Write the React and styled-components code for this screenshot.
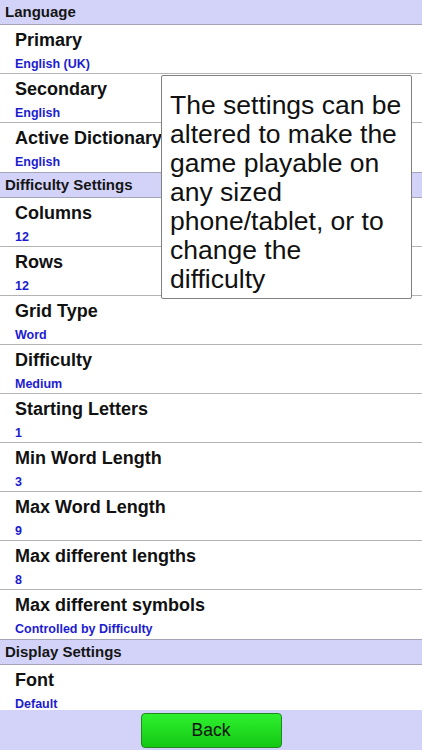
import styled, { createGlobalStyle } from "styled-components";

const GlobalStyle = createGlobalStyle`
  html, body {
    margin: 0;
    padding: 0;
    background: #ffffff;
  }
  body {
    font-family: "Liberation Sans", Arial, sans-serif;
  }
`;

const Page = styled.div`
  position: relative;
  width: 422px;
  height: 750px;
  display: flex;
  flex-direction: column;
  overflow: hidden;
  background: #fff;
`;

const List = styled.div`
  flex: 1;
  overflow: hidden;
`;

const SectionHeader = styled.div`
  height: 24px;
  line-height: 24px;
  padding-left: 5px;
  background: #d3d3f9;
  border-top: ${(p) => (p.$first ? "none" : "1px solid #a4a4b8")};
  border-bottom: 1px solid #a4a4b8;
  font-size: 15px;
  font-weight: bold;
  color: #151515;
`;

const Row = styled.div`
  height: 49px;
  padding: 4px 0 0 15px;
  box-sizing: border-box;
  border-bottom: ${(p) => (p.$last ? "none" : "1px solid #b4b4b4")};
  display: flex;
  flex-direction: column;
  gap: 5px;
`;

const Title = styled.div`
  font-size: 18px;
  line-height: 22px;
  font-weight: bold;
  color: #111;
  white-space: nowrap;
`;

const Value = styled.div`
  font-size: 12.5px;
  line-height: 16px;
  font-weight: bold;
  color: #1c1ccf;
`;

const Footer = styled.div`
  height: 40px;
  flex-shrink: 0;
  background: #d3d3f9;
  display: flex;
  justify-content: center;
  align-items: center;
`;

const BackButton = styled.button`
  width: 141px;
  height: 35px;
  border: 1px solid #1e8a1e;
  border-radius: 4px;
  background: linear-gradient(#2ef02e, #14c814);
  font-family: "Liberation Sans", Arial, sans-serif;
  font-size: 17.5px;
  color: #111;
  padding: 0;
  cursor: pointer;
`;

const Tooltip = styled.div`
  position: absolute;
  top: 75px;
  left: 161px;
  width: 251px;
  height: 224px;
  box-sizing: border-box;
  padding: 15px 8px 0 8px;
  background: #fff;
  border: 1px solid #808080;
  border-radius: 2px;
  font-size: 26.5px;
  line-height: 29px;
  color: #111;
`;

const sections = [
  {
    name: "Language",
    items: [
      ["Primary", "English (UK)"],
      ["Secondary", "English"],
      ["Active Dictionary", "English"],
    ],
  },
  {
    name: "Difficulty Settings",
    items: [
      ["Columns", "12"],
      ["Rows", "12"],
      ["Grid Type", "Word"],
      ["Difficulty", "Medium"],
      ["Starting Letters", "1"],
      ["Min Word Length", "3"],
      ["Max Word Length", "9"],
      ["Max different lengths", "8"],
      ["Max different symbols", "Controlled by Difficulty"],
    ],
  },
  {
    name: "Display Settings",
    items: [["Font", "Default"]],
  },
];

export default function App() {
  return (
    <Page>
      <GlobalStyle />
      <List>
        {sections.map((s, si) => (
          <div key={s.name}>
            <SectionHeader $first={si === 0}>{s.name}</SectionHeader>
            {s.items.map(([title, value], i) => (
              <Row key={title} $last={i === s.items.length - 1}>
                <Title>{title}</Title>
                <Value>{value}</Value>
              </Row>
            ))}
          </div>
        ))}
      </List>
      <Footer>
        <BackButton>Back</BackButton>
      </Footer>
      <Tooltip>
        The settings can be altered to make the game playable on any sized
        phone/tablet, or to change the difficulty
      </Tooltip>
    </Page>
  );
}
